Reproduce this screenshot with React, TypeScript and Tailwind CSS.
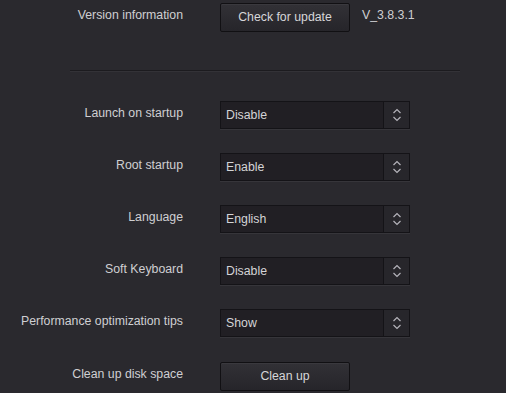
import React from 'react'

const font = { fontFamily: '"Liberation Sans", Arial, sans-serif' }

function Row({ label, children }: { label: string; children: React.ReactNode }) {
    return (
        <div className='flex items-center'>
            <div className='w-[183px] text-right text-[12.3px] text-[#cfcfd2] -mt-[4px]'>{label}</div>
            <div className='ml-[37px] flex items-center'>{children}</div>
        </div>
    )
}

function Btn({ text }: { text: string }) {
    return (
        <button className='w-[130px] h-[29px] rounded-[2px] border border-[#111013] bg-gradient-to-b from-[#323136] to-[#26252a] text-[12.3px] text-[#d6d6d8] shadow-[inset_0_1px_0_#3a393e]'>
            {text}
        </button>
    )
}

function Select({ value }: { value: string }) {
    return (
        <div className='flex w-[190px] h-[28px] border border-[#141317] bg-[#211f24] shadow-[0_1px_0_#36353a]'>
            <div className='flex-1 flex items-center pl-[5px] text-[12.3px] text-[#d4d4d6]'>{value}</div>
            <div className='w-[26px] flex items-center justify-center border-l border-[#141317] bg-[#27262b]'>
                <svg width='10' height='18' viewBox='0 0 10 18' fill='none' stroke='#b4b3ba' strokeWidth='1.2'>
                    <path d='M1.5 7 L5 3.5 L8.5 7' />
                    <path d='M1.5 11 L5 14.5 L8.5 11' />
                </svg>
            </div>
        </div>
    )
}

export default function App() {
    return (
        <div style={font} className='w-[506px] h-[393px] bg-[#2a292e] overflow-hidden pt-[3px]'>
            <div className='flex items-center'>
                <div className='w-[183px] text-right text-[12.3px] text-[#cfcfd2] -mt-[4px]'>Version information</div>
                <div className='ml-[37px]'><Btn text='Check for update' /></div>
                <span className='ml-[12px] -mt-[4px] text-[12.3px] text-[#cfcfd2]'>V_3.8.3.1</span>
            </div>
            <div className='ml-[70px] w-[390px] mt-[38px] h-[2px] border-t border-[#1c1b1f] border-b border-b-[#333237]'></div>
            <div className='flex flex-col gap-[24px] mt-[29px]'>
                <Row label='Launch on startup'><Select value='Disable' /></Row>
                <Row label='Root startup'><Select value='Enable' /></Row>
                <Row label='Language'><Select value='English' /></Row>
                <Row label='Soft Keyboard'><Select value='Disable' /></Row>
                <Row label='Performance optimization tips'><Select value='Show' /></Row>
                <div className='mt-[1px]'>
                    <Row label='Clean up disk space'><Btn text='Clean up' /></Row>
                </div>
            </div>
        </div>
    )
}
